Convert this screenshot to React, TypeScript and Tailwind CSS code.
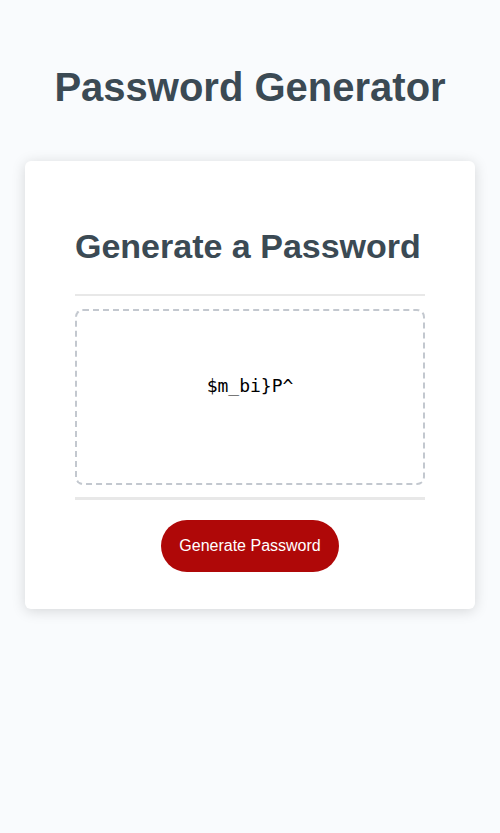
export default function App() {
  return (
    <div className="min-h-screen bg-[#f9fbfd] font-['Liberation_Sans',Arial,sans-serif]">
      <div className="mx-auto max-w-[1200px] px-[25px]">
        <header className="px-5 pt-[60px] pb-[47px] text-center">
          <h1 className="text-[40px] leading-[54px] font-bold whitespace-nowrap text-[#3b4a54]">Password Generator</h1>
        </header>
        <main className="rounded-md bg-white px-[50px] pt-[60px] pb-[37px] shadow-[0_2px_14px_rgba(0,0,0,0.15)]">
          <h2 className="text-[34px] leading-[50px] font-bold whitespace-nowrap text-[#3b4a54]">Generate a Password</h2>
          <div className="mt-[23px] border-t-2 border-b-3 border-[#e8e8e8] pt-[13px] pb-3">
            <textarea
              readOnly
              aria-label="Your secure password"
              defaultValue="$m_bi}P^"
              className="block h-44 w-full resize-none overflow-hidden rounded-lg border-2 border-dashed border-[#c3c8cf] pt-[63px] text-center font-['DejaVu_Sans_Mono',monospace] text-[18px] leading-6 text-black"
            />
          </div>
          <div className="mt-5 text-center">
            <button type="button" className="h-[52px] rounded-full bg-[#af0808] px-[18px] text-[16px] text-white">
              Generate Password
            </button>
          </div>
        </main>
      </div>
    </div>
  );
}
